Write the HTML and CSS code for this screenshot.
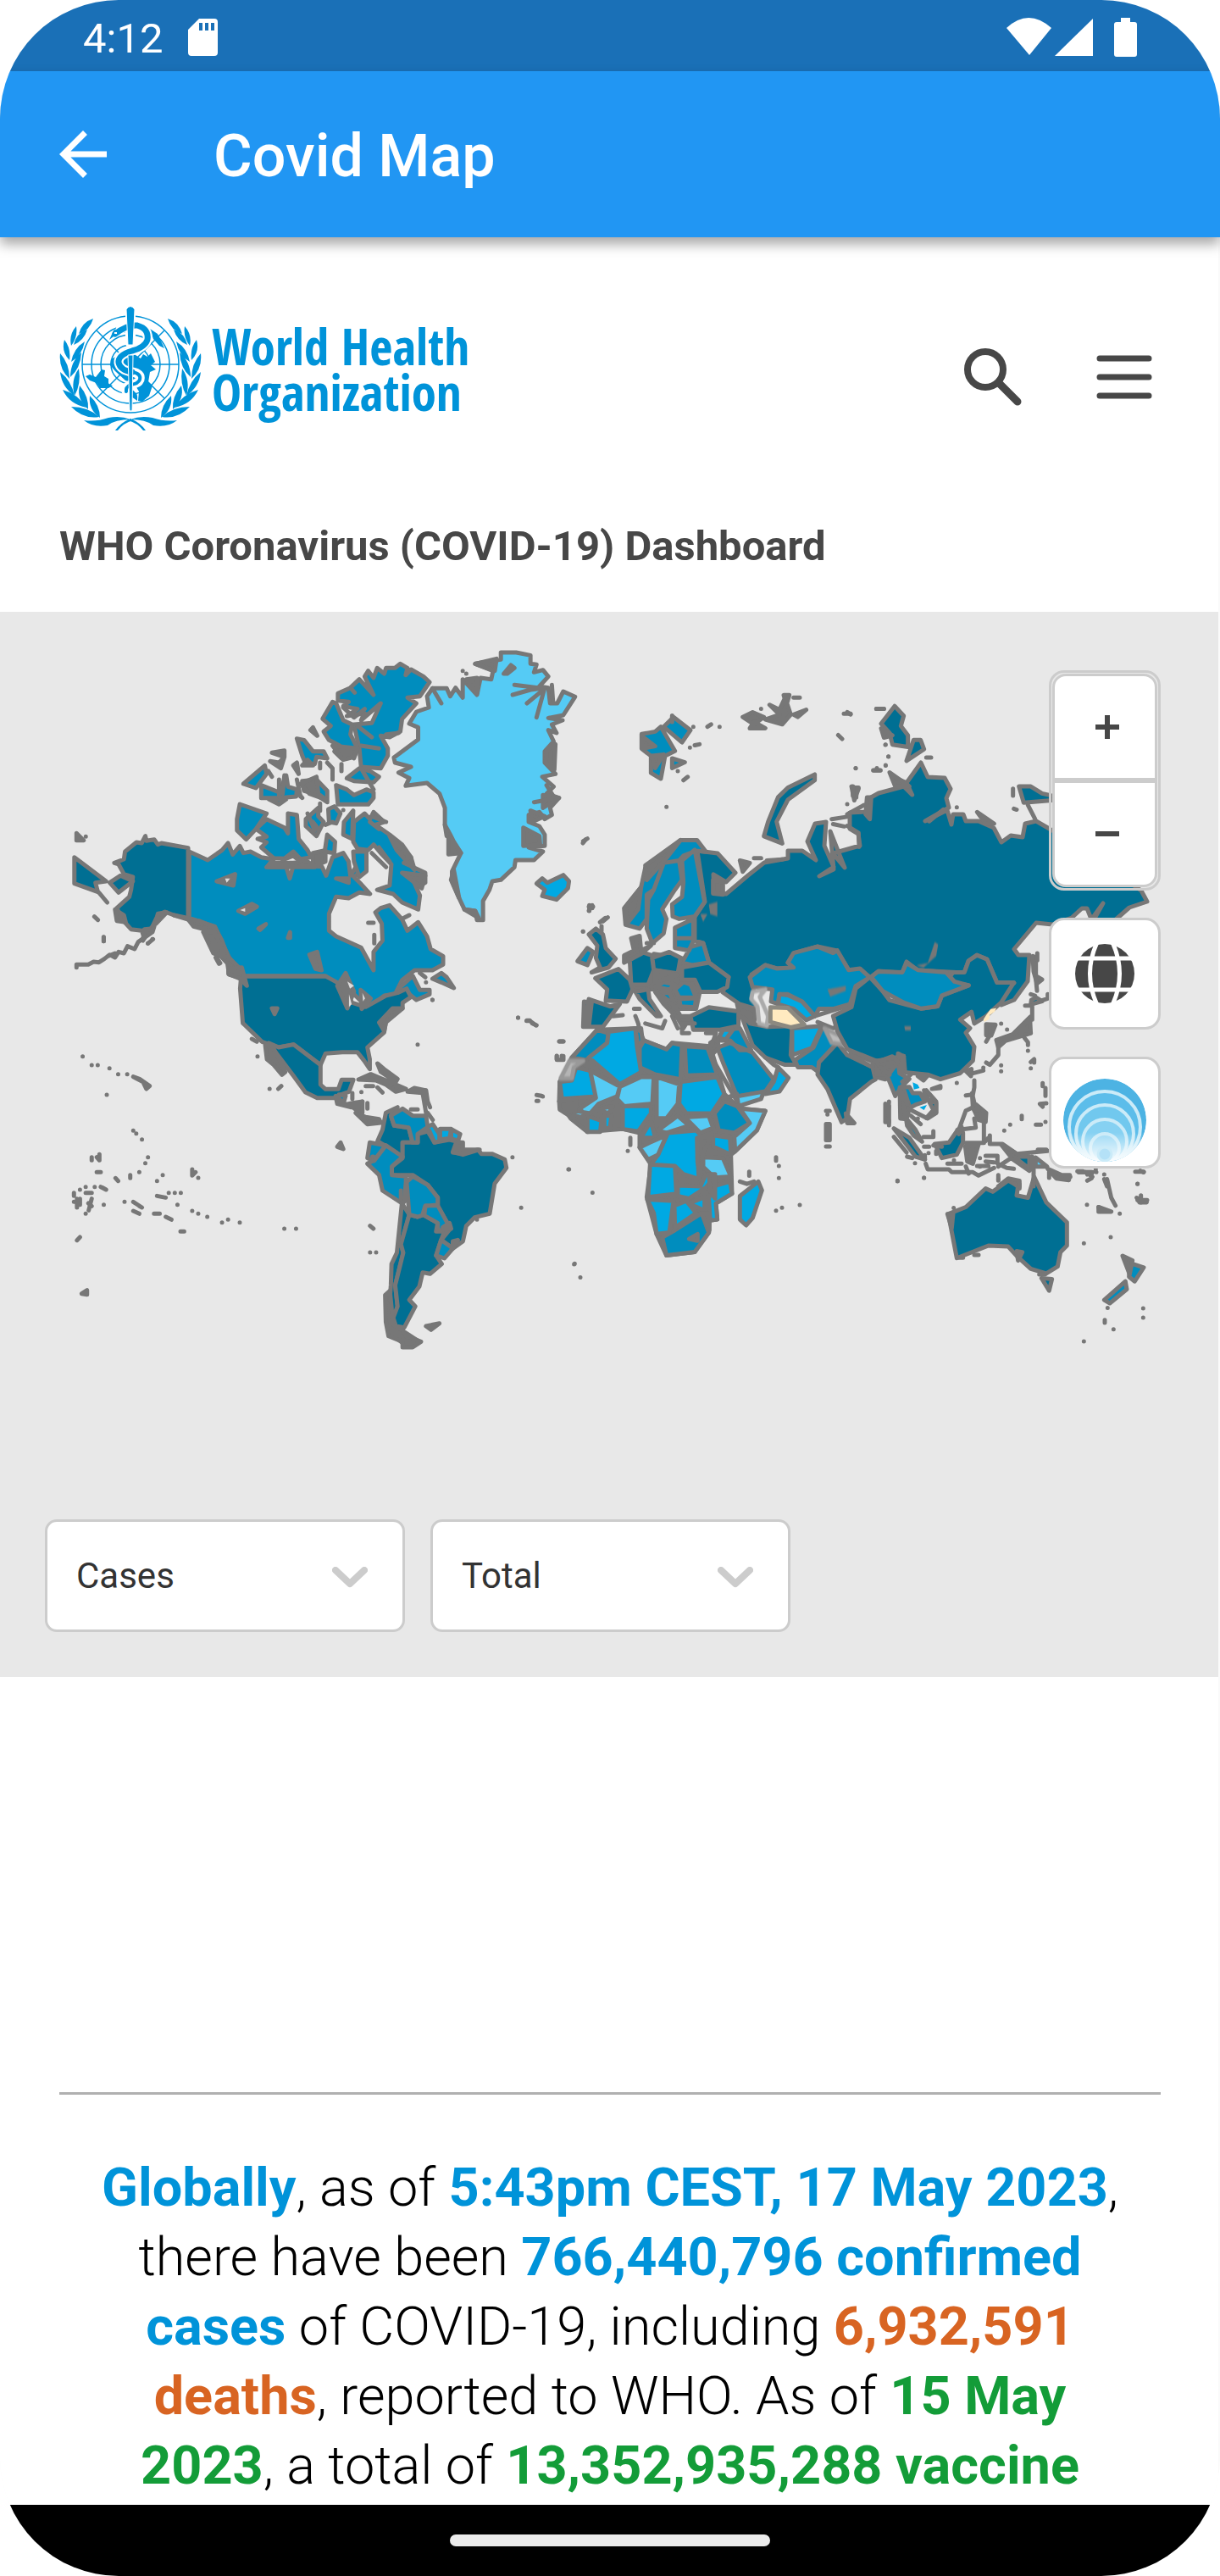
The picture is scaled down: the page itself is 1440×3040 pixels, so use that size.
FILE: index.html
```html
<!DOCTYPE html>
<html lang="en">
<head>
<meta charset="utf-8">
<meta name="viewport" content="width=device-width, initial-scale=1">
<title>Covid Map</title>
<link rel="stylesheet" href="styles.css">
</head>
<body>
<div class="screen">
  <div class="status-bar">
    <span class="clock">4:12</span>
    <svg class="sd" width="35" height="44" viewBox="0 0 35 44" aria-hidden="true"><path fill="#fff" fill-rule="evenodd" d="M13 0H31Q35 0 35 4V40Q35 44 31 44H4Q0 44 0 40V13ZM13 5V14H17V5ZM20 5V14H24V5ZM27 5V14H31V5Z"/></svg>
    <div class="status-icons">
      <svg width="154" height="46" viewBox="0 0 154 46" fill="#fff" aria-hidden="true"><path d="M0 12Q26-12 53 12L27 44Z"/><path d="M102 1V45H57Z"/><path d="M135 0H146V5H151Q154 5 154 8V43Q154 46 151 46H130Q127 46 127 43V8Q127 5 130 5H135Z"/></svg>
    </div>
  </div>
  <header class="app-bar">
    <button class="icon-button" aria-label="Back"><svg width="56" height="56" viewBox="4 4 16 16" fill="#fff"><path d="M20 11H7.830L13.420 5.410 12 4l-8 8 8 8 1.410-1.410L7.830 13H20z"/></svg></button>
    <h1 class="app-title">Covid Map</h1>
  </header>

  <main class="page">
    <div class="site-header">
      <a class="brand" href="#">
        <svg class="emblem" width="168" height="148" viewBox="0 0 168 148" aria-hidden="true">
          <defs>
            <g id="laurel" fill="#0093d9">
              <path d="M40 15Q27 19 23 33Q36 29 40 15M20 24Q11 34 14 47Q22 37 20 24M6 40Q2 54 12 64Q14 50 6 40M1 56Q-1 74 12 86Q12 68 1 56M1 78Q3 96 18 106Q14 88 1 78M4 99Q12 116 32 120Q22 104 4 99M14 119Q28 134 47 131Q34 119 14 119"/>
              <path d="M33 28Q20 32 17 46Q29 41 33 28M30 42Q17 50 14 66Q27 58 30 42M26 55Q13 66 13 84Q25 74 26 55M23 74Q13 88 18 106Q26 92 23 74M24 94Q20 110 34 122Q35 107 24 94M36 106Q34 122 48 132Q48 117 36 106"/>
              <path d="M29 135Q44 137 58 132Q72 129 84 134Q66 134 57 141Q40 144 29 135M84 133Q72 138 66 147H69Q76 138 87 135Z"/>
            </g>
          </defs>
          <use href="#laurel"/><use href="#laurel" transform="translate(168 0) scale(-1 1)"/>
          <g fill="none" stroke="#0093d9" stroke-width="1.500"><circle cx="84" cy="69" r="57"/><circle cx="84" cy="69" r="46"/><circle cx="84" cy="69" r="35"/><circle cx="84" cy="69" r="23"/><path d="M27 69H141M44 29L124 109M124 29L44 109"/></g>
          <path fill="#0093d9" d="M31 83L36 81 43 84 50 75 54 76 53 83 58 86 58 92 63 94 58 97 48 97 44 91 36 88ZM61 63L72 57 78 50 96 62 99 57 104 60 108 56 113 66 108 70 114 75 107 78 105 90 110 94 106 106 98 113 93 112 94 101 88 91 78 88 66 77 60 70ZM59 40L64 29 76 22 82 22 79 31 68 33ZM107 27L116 33 124 50 118 47 111 39ZM84 98Q94 102 92 112L85 107Z"/>
          <g fill="none" stroke-linecap="round">
            <path stroke="#fff" stroke-width="11" d="M72 28Q80 22 92 23Q106 27 104 40Q101 49 86 53Q69 58 70 67Q72 76 86 78Q97 80 95 87Q93 92 84 93Q78 96 79 101"/>
            <path stroke="#fff" stroke-width="12" d="M84 5V44"/>
            <path stroke="#0093d9" stroke-width="7" d="M66 33Q80 22 92 23Q106 27 104 40Q101 49 86 53Q69 58 70 67Q72 76 86 78"/>
            <path stroke="#0093d9" stroke-width="4" d="M86 78Q97 80 95 87Q93 92 84 93Q78 96 79 101"/>
          </g>
          <path fill="#0093d9" stroke="#fff" stroke-width="1" d="M79 4Q84-3 89 4L87 46H81ZM81 58H87L86 123Q84 125 83 123Z"/>
          <path d="M65 32h3" stroke="#fff" stroke-width="2"/>
        </svg>
        <span class="brand-name">World Health<br>Organization</span>
      </a>
      <div class="site-actions">
        <button class="icon-button" aria-label="Search"><svg width="68" height="68" viewBox="0 0 68 68" fill="none" stroke="#474747"><circle cx="25" cy="25" r="21" stroke-width="8"/><path d="M41 41L63 63" stroke-width="9" stroke-linecap="round"/></svg></button>
        <button class="icon-button" aria-label="Menu"><svg width="66" height="52" viewBox="0 0 66 52" stroke="#474747" stroke-width="7" stroke-linecap="round"><path d="M4 4H62M4 26H62M4 48H62"/></svg></button>
      </div>
    </div>
    <h2 class="dashboard-title">WHO Coronavirus (COVID-19) Dashboard</h2>

    <section class="map" aria-label="World map of cases">
      <svg class="world" viewBox="0 722 1438 1071" role="img" aria-label="World map">
        <defs><filter id="soft" x="-30%" y="-30%" width="160%" height="160%"><feGaussianBlur stdDeviation="2"/></filter></defs>
        <!-- Arctic Canada, Alaska, Greenland -->
        <g class="land" transform="translate(60 740) scale(.42092 .33333)">
          <g class="c4">
            <path d="M385 782L310 765 300 770 290 752 268 757 265 740 255 765 240 762 208 795 205 822 178 835 190 840 205 875 230 885 225 930 220 955 185 995 200 1035 225 1070 255 1075 262 1100 285 1060 300 1020 320 1008 345 1020 385 1035Z"/>
            <path d="M66 815L155 900 125 905 132 938 66 908ZM165 905L195 880 230 900 190 940ZM262 1070L280 1068 258 1110Z"/>
          </g>
          <g class="c3">
            <path d="M388 795L440 825 480 790 497 765 510 805 530 775 540 800 560 795 590 815 625 822 605 850 660 850 670 890 680 845 760 848 772 880 790 815 820 800 835 830 840 880 855 850 865 870 850 885 870 910 895 945 865 940 835 960 800 955 780 1015 780 1075 800 1095 870 1135 905 1215 905 1150 930 1110 928 1050 910 1010 925 995 950 985 985 1035 1000 1075 1030 1045 1055 1095 1065 1140 1100 1165 1100 1195 1070 1215 1020 1215 985 1250 965 1300 935 1305 890 1350 850 1300 800 1265 770 1235 540 1235 500 1170 460 1060 388 1030Z"/>
            <path d="M605 680L655 710 665 730 665 660 690 665 695 750 720 790 730 815 700 822 680 795 655 820 625 818 590 780 605 762 580 750 605 742 575 715ZM530 627L605 660 575 715 548 752 522 720 522 680ZM715 680L750 640 750 670 765 690 745 740 715 705ZM778 645L795 635 812 660 800 695 780 690ZM775 735L797 760 795 800 768 795ZM820 735L822 690 848 650 845 750Z"/>
            <path d="M850 690L880 660 895 680 905 655 935 690 910 700 950 735 985 770 1010 815 990 835 1050 870 1050 905 1030 920 1010 880 1035 950 1030 1000 985 975 960 945 915 930 950 915 955 840 925 800 905 770 890 790 860 785 848 760ZM848 795L885 795 885 865 865 885 850 830Z"/>
            <path d="M830 535L865 500 895 510 920 530 905 550 850 545ZM800 560L830 575 850 595 885 575 905 585 905 605 890 628 805 628Z"/>
            <path d="M805 235L840 215 865 185 905 240 880 175 890 155 905 180 915 145 935 165 940 145 965 145 980 130 1000 145 995 170 1010 150 1045 175 1062 195 1035 245 1000 250 1025 270 985 325 980 370 950 390 925 385 945 430 945 455 925 500 870 495 865 430 850 345 900 340 925 270 870 330 880 305 830 315 860 290 820 280 835 265 805 260Z"/>
            <path d="M790 265L800 270 820 330 845 345 840 380 860 430 850 465 830 435 815 465 795 440 810 420 780 400 765 370 785 350 762 325ZM690 395L710 400 735 440 765 440 775 465 745 460 740 485 715 485 705 455ZM540 555L600 490 605 520 575 570ZM590 560L640 585 660 525 665 565 690 575 688 600 640 605 590 605ZM612 610L660 610 640 628ZM705 545L745 540 775 580 775 620 740 590 710 580Z"/>
            <path d="M1070 1245L1095 1225 1110 1240 1130 1278 1095 1258ZM975 1280L1015 1235 1035 1285 1062 1285 1062 1300 1025 1320 1005 1300Z"/>
          </g>
          <path class="c1" d="M1262 90L1305 90 1345 100 1345 130 1362 133 1355 160 1380 152 1395 175 1370 210 1395 215 1400 270 1420 270 1437 228 1470 247 1437 312 1395 322 1435 330 1405 345 1418 375 1395 365 1410 405 1385 440 1385 480 1415 520 1378 530 1410 565 1390 590 1425 605 1400 640 1405 665 1385 680 1370 655 1340 665 1340 690 1370 705 1385 735 1385 775 1340 780 1380 795 1355 825 1303 825 1300 850 1262 895 1238 900 1230 930 1212 970 1212 1037 1195 1037 1190 1005 1160 1000 1145 960 1125 900 1125 865 1150 800 1130 760 1120 735 1105 700 1105 640 1090 590 1055 552 995 562 1005 535 975 515 1010 495 965 480 962 462 1030 398 1030 355 1005 342 1025 300 1060 285 1055 245 1070 217 1110 217 1120 245 1135 215 1155 250 1155 185 1195 240 1205 180 1235 185 1240 155 1190 130 1262 115Z"/>
          <path class="c2" d="M1362 908L1378 890 1392 905 1437 878 1453 900 1450 925 1418 965 1378 952 1385 930Z"/>
          <path class="rock" d="M1190 130L1250 112 1245 155ZM1165 185L1195 180 1195 235ZM1325 710L1370 740 1372 770 1325 775ZM1390 435L1415 415 1412 505 1388 480ZM1115 735L1150 800 1115 805ZM1130 860L1145 960 1122 895ZM1160 1000L1190 1005 1200 1030ZM1270 165L1290 135 1300 145 1280 165ZM1380 595L1425 605 1380 640ZM1345 650L1385 670 1350 690ZM72 730L92 755 72 755ZM735 355L747 385 728 365ZM620 445L655 437 655 460ZM615 475L640 480 655 460 645 500ZM385 1035L415 1040 460 1065 480 1110 495 1165 535 1215 540 1245 500 1230 495 1190 465 1150 455 1110 430 1070 400 1060ZM700 555L745 530 750 590 770 610 725 590ZM680 490L690 480 695 520ZM705 490L735 490 720 470ZM790 420L860 430 850 460 820 470ZM735 800L770 790 770 830 735 850ZM800 890L835 890 835 905ZM950 740L1010 815 1020 860 970 790ZM985 870L1050 880 1040 925ZM615 835L680 835 720 830 740 850 610 850ZM180 1000L205 1020 210 1045 185 1040ZM300 1015L325 1010 295 1050ZM345 1020L385 1030M430 1065L450 1110"/>
          <path class="line" d="M1295 240L1345 222 1385 215 1362 320M1300 205L1385 218 1335 270M840 215L852 232M1070 217L1095 270M820 285L850 320 880 290M900 670L940 690M895 690L920 715M900 800L940 850M920 780L950 830M940 380L975 375M870 500L905 575M775 480L790 500 790 540M735 690L750 715M655 525L650 590M1405 205L1408 260M1155 155h0M1165 165h0M650 825L680 810 700 830M770 700L790 690M720 660L740 720M690 540L700 600M640 540V600M870 420L920 430M860 350L900 390M1355 620L1400 610M1390 560L1410 600M1105 700L1110 740M1125 750L1125 800"/>
          <path class="dots" d="M72 1205V1195H105L120 1185 135 1187 150 1175 165 1160 180 1170 190 1150 205 1155 215 1130 235 1140 245 1115 262 1100 285 1080 290 1060M160 1165L180 1155M135 940L158 975M122 1025L132 1037M148 1097V1112M98 742h0M272 1120h0M285 1105h0M465 1170L475 1190M1492 765L1500 752M1510 985V1005M1518 985V995M1555 1030L1540 1045M1492 1078h0M1310 1383h0M1335 1393h8M1350 1403L1362 1410M1070 1320h0M820 648h0M755 625V650M890 1047H905M907 1090V1120M990 1030L1005 1020M1035 1225L1050 1240M1052 1258h0M695 590L705 605M815 485V510M610 510L620 530M755 480V500"/>
        </g>
        <!-- Americas -->
        <g class="land" transform="translate(60 1100) scale(.39541 .33333)">
          <g class="c4">
            <path d="M568 157H822L865 185 900 250 940 265 1000 225 1035 215 1062 200 1075 230 1050 250 1050 270 1020 285 1000 320 995 355 945 408 952 450 952 485 935 455 915 425 870 425 820 430 805 470 725 398 680 408 630 388 580 330 573 322 565 200Z"/>
            <path d="M650 392L680 408 725 398 805 470 805 540 820 556 858 556 868 523 903 523 890 565 855 580 855 587H795L760 567 725 510Z"/>
            <path d="M1000 640L1035 620 1015 650 1025 685 1068 692 1080 745 1050 745 1050 795 1000 758 975 740 990 700Z"/>
            <path d="M1050 745L1095 745 1095 715 1125 705 1145 745 1190 735 1225 745 1200 780 1230 785 1275 770 1285 785 1318 785 1355 805 1360 835 1325 890 1310 997 1265 1010 1240 1040 1230 1095 1200 1120 1165 1090 1193 1050 1155 970 1155 940 1125 895 1080 860 1018 860 1018 830 1050 800Z"/>
            <path d="M1048 960L1070 1000 1045 1105 1052 1135 1028 1250 1035 1325 1025 1365 1035 1400 1100 1450 1060 1465 1015 1420 1010 1330 1015 1250 1017 1175 1033 1135Z"/>
            <path d="M1070 1000L1095 1008 1112 1000 1155 1030 1150 1060 1175 1060 1165 1090 1150 1145 1167 1175 1132 1210 1110 1205 1100 1255 1070 1302 1088 1325 1055 1400 1030 1395 1022 1365 1035 1325 1028 1250 1052 1135 1045 1105Z"/>
          </g>
          <g class="c3">
            <path d="M1015 650L1050 625 1080 650 1120 650 1125 690 1095 715 1095 745 1080 745 1068 692 1025 685Z"/>
            <path d="M952 745L1000 755 965 810 945 800ZM1000 755L1050 795 1018 830 1018 860 1060 865 1060 885 1055 955 1048 960 990 915 980 860 945 820 965 808ZM1062 885L1080 865 1125 895 1155 940 1155 965 1118 970 1115 1000 1095 1008 1070 1000ZM1118 968L1155 968 1192 1048 1155 1058 1155 1030 1110 1000ZM1165 1090L1200 1120 1175 1155 1150 1145ZM860 575L880 580 875 600 858 600Z"/>
          </g>
          <path class="c2" d="M1125 690L1140 680 1160 715 1160 740 1145 745ZM1162 697L1195 697 1190 730 1162 735ZM1195 697L1222 715 1215 740 1195 730Z"/>
          <path class="c1" d="M895 615L924 605 922 638Z"/>
          <path class="rock" d="M918 522L955 503 1010 530 1060 555 1030 565 1000 540 970 525ZM1065 565L1085 552 1118 560 1115 570ZM975 465L995 485 1035 520 1030 530 985 495ZM910 640L940 655 980 662 985 675 945 680ZM850 580L880 610 900 605 930 600 925 615 895 620 855 608ZM998 1285L1012 1270 1018 1340 1022 1390 1050 1410 1060 1430 1105 1450 1080 1470 1050 1470 1050 1450 1008 1430 1000 1380ZM1120 1395L1160 1385 1135 1408ZM1210 745L1230 745 1230 770 1280 770 1230 788 1200 778ZM640 400L660 400 700 495 690 505 665 470 645 450ZM530 130L570 125 585 190 565 165 530 148ZM455 0L490 0 520 90 485 75ZM980 320L1020 270 1050 270 1000 320 995 350ZM246 512L265 520 295 545 285 555 275 530ZM855 760L865 745 873 768ZM92 1280L108 1268 108 1283ZM1200 1120L1215 1090 1200 1095ZM1170 1045L1190 1030 1195 1050Z"/>
          <path class="line" d="M1120 560L1125 600 1132 620M1125 640L1140 665M1075 628H1095M975 550L990 568M1110 570L1120 640M900 570V590M1045 915V945M960 795h3M930 600V640"/>
          <path class="dots" d="M95 440h0M122 471h0M140 471h0M175 482h0M201 503h0M228 503h0M167 576h0M246 703h0M255 713h0M272 734h0M122 797V808M145 787V808L137 797M137 850H149M290 797h0M282 818h0M264 850h0M237 860V871M193 871L201 881M334 860h0M317 881h0M422 840V862L432 850M440 870h0M104 902h0M131 902h0M149 902L165 912 155 905M87 912h0M69 923V934M69 955h0M104 923H122M78 944V975M87 944V965M122 944L113 985M122 970L112 960M104 997h0M158 965h0M220 955h0M246 955L272 975 264 970M246 987L264 997M308 997H325M343 1008L360 1018M378 965h0M317 934L343 940M352 923h0M370 923h0M388 923h0M422 987h0M440 997h0M467 1008h0M511 1028h0M529 1018h0M564 1028h0M697 1050h0M732 1050h0M387 1060H398M78 1091L87 1080M953 1040L963 1050M953 1134h0M971 1134h0M1378 797h0M1404 976h0M1545 840h0M1562 1176h0M1395 303h0M1420 314H1430L1448 330M1095 398h0M1139 240h0M617 440h0M653 555h0M679 555L688 545M600 378L615 388M1518 387H1530M1510 438V450M1525 438V450M1450 577L1465 580M1450 598h5M158 18V32M290 40L305 25M492 90L502 112M1272 1018h0M927 566h0M940 545H962M945 605V625"/>
          <g filter="url(#soft)" class="lakes"><path d="M772 80L795 70 808 135 790 130ZM660 270H676L668 290ZM855 190L880 145 905 210 885 270ZM925 205L955 235 928 272Z"/><path class="water" d="M885 175L905 190 893 200ZM890 220L898 255 890 265ZM930 215L938 235 932 245Z"/><path d="M495-180L550-205 545-165ZM560-75L600-100 615-90 580-65ZM620-12L642-28 625-8ZM708 20L714 0V20Z"/><path class="water" d="M520-190L535-190 525-175ZM565-78L580-85V-72Z"/></g>
        </g>
        <!-- Russia -->
        <g class="land"><path class="c4" d="M823 1004L847 1007 868 1030 857 1041 842 1032 843 1053 857 1055 883 1033 902 1018 930 1013 930 1004 947 1004 963 1015 953 993 962 972 975 970 973 998 984 1023 967 1034 984 1026 980 981 997 1024 983 1007 1015 998 1013 984 1003 978 1003 959 1023 958 1028 941 1037 936 1067 928 1087 900 1095 917 1115 918 1122 931 1117 942 1120 953 1092 969 1118 956 1123 973 1125 961 1137 961 1140 969 1155 969 1173 977 1182 994 1193 986 1207 988 1210 972 1223 969 1242 980 1347 1051 1354 1064 1333 1071 1300 1100 1289 1084 1302 1066 1293 1082 1287 1082 1283 1072 1277 1072 1265 1083 1242 1091 1223 1089 1197 1120 1202 1127 1215 1127 1213 1158 1197 1180 1182 1186 1182 1172 1197 1160 1177 1160 1165 1132 1153 1127 1143 1134 1138 1148 1083 1145 1070 1135 1065 1148 1037 1146 1028 1153 1002 1145 988 1122 965 1117 937 1125 930 1136 937 1142 917 1143 903 1139 887 1150 893 1191 873 1185 853 1171 860 1153 837 1136 830 1113 820 1110 820 1082 832 1064Z"/></g>
        <!-- Europe, Middle East, Africa -->
        <g class="land" transform="translate(640 740) scale(.33333 .57398)">
          <path class="rock" d="M62 935L105 885 195 828 340 825 360 850 440 868 460 855 595 862 645 960 700 990 790 995 760 1035 683 1078 668 1085 672 1165 615 1185 620 1218 592 1220 590 1245 540 1285 440 1292 405 1248 370 1172 385 1105 345 1070 345 1040 285 1032 160 1038 100 1010 60 975ZM365 700L395 672 590 690 560 745 545 785 480 785 400 745 350 745 320 740 315 690Z"/>
          <g class="c3">
            <path d="M290 578L350 535 365 495 430 470 490 438 548 438 580 462 545 460 500 470 485 480 430 485 395 540 370 550 370 600 345 620 295 612ZM395 540L430 485 485 480 495 520 470 540 425 580 440 600 430 630 390 650 370 620 375 560ZM495 480L540 458 570 550 575 565 540 595 485 600 462 595 460 570 495 555 500 525ZM470 618L535 600 535 645 520 665 470 660ZM470 640H535M495 690L525 658 570 650 590 690 530 695ZM470 745L500 730 525 735 545 762 485 762ZM535 730L550 735V750L535 748ZM485 765L545 763 540 782 490 780ZM125 687L160 660 180 668 160 695ZM400 740L430 730 470 735 450 745ZM370 715L395 708 440 715 400 725ZM410 752L450 752 470 775 440 765Z"/>
            <path d="M352 220L400 215 420 205 470 255 435 265 420 312 385 300 385 265 352 250ZM430 205L465 185 525 212 495 237ZM460 270L505 278 460 290Z"/>
            <path d="M735 720L790 695 830 702 890 700 870 690 890 670 975 657 1030 670 1045 665 1085 705 1125 702 1160 720 1110 738 1090 775 1030 785 980 785 965 800 920 770 870 755 840 755 835 775 810 770 815 745 745 740ZM895 890L960 865 995 820 1045 855 980 895 990 920 955 905 905 905ZM620 850L640 828 700 825 740 870 700 870 665 850ZM620 865L665 855 745 875 820 930 790 955 690 965 640 895Z"/>
            <path d="M105 885L195 828 235 835 230 855 170 885 155 890ZM330 825H350L355 850 340 865ZM345 865L360 850 440 868 460 855 495 860 490 930 400 920 345 905ZM505 862L585 865 620 920 510 922ZM610 1000L645 975 690 985 735 1020 680 1040 625 1035ZM425 1255L470 1240 565 1205 590 1245 540 1285 440 1292Z"/>
          </g>
          <g class="c4">
            <path d="M495 700L590 690 660 720 655 740 620 750 560 750 540 725 495 725ZM390 680L450 668 490 680 480 712 395 705ZM310 685L350 668 388 675 395 705 375 735 315 735ZM188 722L270 703 310 725 320 745 300 770 225 768 230 745ZM165 765L240 780 275 775 215 822 155 822ZM148 770L175 772 165 822 145 822ZM330 750L375 745 380 765 420 800 405 800 345 765ZM175 710L205 700 190 680 195 655 165 632 190 620 215 632 225 660 260 682 235 700ZM525 800L590 782 695 790 695 820 630 828 535 828Z"/>
            <path d="M965 303L965 315 870 355 830 400 850 445 785 430 800 400 835 350 870 330ZM700 790L735 815 800 822 885 820 880 880 900 900 860 900 790 885 745 860 725 830ZM980 895L1045 855 1080 880 1170 905 1180 930 1165 935 1090 970 1080 1010 1060 1018 1010 950 975 920Z"/>
          </g>
          <g class="c2">
            <path d="M835 775L840 755 870 757 920 770 965 800 935 808 890 785ZM885 825L990 820 955 865 885 880ZM790 960L820 935 835 905 872 927 840 955ZM625 845L640 828 675 828 650 848ZM235 832L330 825 335 860 350 915 275 940 165 885 230 855ZM62 935L105 932 120 905 170 912 190 965 70 970ZM490 935L620 925 645 960 600 1000 510 1000 485 980ZM285 985H385V1000L340 1037 285 1032ZM160 1005L210 1015 205 1038 160 1038ZM220 1005H245L240 1030H220ZM350 1050L385 1015 400 1050ZM445 1040L545 1035 570 1050 550 1090 555 1135 500 1125 470 1108 385 1105 410 1085ZM605 1045L665 1050 668 1085 605 1068ZM382 1105L470 1108 475 1165 375 1172ZM480 1148L560 1150 580 1125 610 1130 580 1152 520 1175 480 1170ZM605 1150L665 1140 672 1165 615 1185 620 1218 595 1220 590 1175ZM520 1185L575 1172V1200ZM468 1190L510 1180 545 1205 470 1235ZM372 1177L465 1180 450 1245 405 1248 395 1205ZM700 1170L765 1140 778 1158 745 1215 722 1230 700 1218Z"/>
          </g>
          <g class="c1">
            <path d="M170 912L275 945 265 965 200 980 170 1000 120 995 190 968ZM275 945L350 925H395L390 980 290 985 265 970ZM405 925L485 940 480 980 440 1010H405ZM690 965L785 955 775 970 695 985ZM735 1020L700 990 790 995 760 1035 683 1078 680 1048ZM505 1008L590 1005 605 1030 560 1040ZM410 1035L480 1005 520 1025 440 1040ZM345 1070L380 1060 440 1045 410 1085 375 1095ZM570 1090L640 1092 668 1130 610 1132 570 1110ZM195 992L250 985 235 1000ZM80 998L140 995 150 1010Z"/>
          </g>
          <path class="line" d="M965 800L1085 778M975 812L1030 825 1060 815M1090 872L1180 897 1240 895 1275 882M1090 880L1170 905M605 890L690 975M640 970L690 960M790 885L820 900 835 905"/>
          <path class="rock" d="M400 750L470 780 490 800 525 800 500 825 480 805 430 775ZM400 705L480 715 400 730ZM315 640L345 635 350 665 385 655 350 672 290 690 290 675 325 665ZM60 975L120 970 120 985 110 1010 62 992ZM690 775L755 790 750 815 700 800ZM595 855L620 845 625 865 600 880ZM548 1050L600 1048 570 1080 560 1125 550 1100ZM590 1125H612V1175L595 1160ZM520 1258L550 1248V1262ZM565 1205H592V1240ZM1170 900L1220 900 1215 930 1180 925ZM1075 1000L1105 1020 1080 1020ZM295 575L350 535 340 580 300 610ZM365 490L490 438 440 475 370 520ZM355 225L400 245 355 250ZM388 265L430 262 400 290ZM710 185L745 175 785 185 750 200ZM805 160L840 170 860 145 880 180 850 200 790 190 840 180ZM890 180L935 170 905 185ZM750 195L790 208H735ZM605 520L640 525 640 550 605 548ZM700 480L735 485 710 503ZM855 140L875 140 865 160ZM1250 310L1290 320 1310 345ZM1150 350L1165 350 1160 395 1145 385Z"/>
          <g filter="url(#soft)"><path fill="#b5b5b5" stroke="#999" d="M65 928L97 892 145 892 112 905 105 928Z"/><path fill="#e8e8e8" stroke="#aaa" d="M745 750L790 745 770 760 800 800 795 820 768 815 762 780 740 765Z"/><path fill="#bbb" stroke="#999" d="M1000 825L1060 842 1065 858 1025 855Z"/><path fill="#777" stroke="none" d="M590 570L620 565 620 595 595 590ZM1010 745L1075 738 1075 748 1020 760ZM560 590L585 590 570 606Z"/></g>
          <path fill="#ffeac0" stroke="#8c8980" d="M808 782L870 783 928 817 880 823 808 812Z"/>
          <path class="dots" d="M165 575H180M165 583h0M215 605L232 597M210 615V625M145 626h0M145 440L160 435M440 370h0M355 223h0M480 296h0M500 315L515 308M523 248h0M540 243L557 241M535 205h0M585 205L598 200M628 205h0M460 182V195M1068 178H1092M1048 222L1062 230M1110 290h0M1173 295H1197M1185 290h0M1100 330H1120M1112 340V350M1215 242h0M1226 266h0M1216 284h0M1183 168H1210M1080 364h0M1025 395L1080 390M1030 405L1070 410M890 145H912M775 168h0M750 475H775M795 480L850 478M250 800L285 798M325 785H345M330 800L340 815 345 830M365 815L425 825 435 810M460 800L480 825M540 815L495 815 495 835H520M580 835H615L600 860M60 852H75M52 882V890H75V882M2 965h0M95 1115h0M178 1163h0M115 1309h0M135 1337h0M312 1050V1065M303 1077h0M733 1120V1128M700 1140L725 1145 750 1140M828 1090V1097M838 1108h0M838 1133h0M828 1200h0M849 1194h0M912 1188h0M1005 995H1018M1010 1002h0M1005 1022V1055H1018V1022ZM1005 1068H1018M1215 980V1018H1228V985M1258 1139h0M370 650h25"/>
        </g>
        <!-- East Asia, Oceania -->
        <g class="land" transform="translate(1000 780) scale(.33333 .54847)">
          <g class="c4">
            <path d="M80 680L125 710 150 730 262 748 320 743 335 720 430 698 350 690 375 670 415 670 430 645 460 633 495 642 530 692 590 692 545 735 490 765 450 780 440 755 400 772 435 790 420 800 450 830 445 860 400 887 330 900 285 890 205 885 200 850 150 860 100 860 0 835-35 796-50 764 15 745 30 705Z"/>
            <path d="M358 1190L420 1175 490 1135 515 1142 570 1118 605 1130 600 1150 640 1155 662 1110 705 1165 778 1208 778 1258 755 1272 745 1303 705 1318 650 1308 600 1280 570 1260 500 1258 388 1285ZM688 1328L725 1330 715 1355ZM120 135L168 97 200 118 190 140 215 160 215 185 160 180 150 155ZM210 215L235 170 260 170 272 190ZM608 270H650L690 285 740 292 725 300 625 305Z"/>
          </g>
          <g class="c3">
            <path d="M85 680L110 668 195 670 210 650 250 665 350 670 380 690 430 698 335 720 320 743 262 748 200 735 125 710ZM1000 1295L1050 1305 1018 1335 998 1325ZM910 1375L985 1335 990 1352 930 1382Z"/>
          </g>
          <path class="rock" d="M110 860L200 850 200 870 150 885ZM105 870L150 890 105 890ZM975 1280L1010 1290 1000 1320ZM890 1175L935 1185H895ZM1025 1155L1060 1165 1035 1165ZM120 145L160 160 130 165ZM355 1190L375 1190 370 1220ZM600 1270L620 1272 605 1290ZM460 325L520 350 490 350ZM150 240L220 270 170 270ZM15 270L40 275 25 300ZM585 1120L610 1125V1135Z"/>
          <path class="line" d="M100 860L130 885 170 895M290 345L340 320M640 310L665 340M20 270V290M0 330L60 310M0 355L40 370 42 400M920 1115L935 1155 950 1172M820 1100H870L850 1105"/>
          <path class="dots" d="M103 103H130M0 110L12 115M30 231h0M92 235H118M146 206h0M136 225h0M136 180h0M280 208H297M388 315h0M587 275V290M590 318L600 320M272 1112h0M178 1118h0M377 1177h0M535 1115h0M770 1110H790M815 1098H835M845 1100L868 1110M882 1100h0M910 1105h0M1038 1097L1048 1100M1028 1125h0M1028 1160H1062M1040 1150V1165M849 1170h0M965 1189h0M890 1175V1185M838 1253h0M933 1240h0M912 1418V1424M943 1438h0M838 1464h0M1048 1393h0M1048 1413h0M922 1392h0M450 1278H465M395 1284H410M700 1320H680"/>
          <path filter="url(#soft)" fill="#777" stroke="none" d="M245 655L285 650 310 605 322 610 315 635 270 660ZM202 786H225V795H205Z"/>
        </g>
        <!-- Japan, Korea, South-East Asia -->
        <g class="land" transform="translate(1040 1120) scale(.33333)">
          <g class="c4">
            <path d="M470 298L528 240V290ZM532 180L550 172 570 185 530 196ZM537 25L548 30V95L570 108 552 122 540 80ZM190 690L240 685 268 645 290 650 290 685 268 728 215 740ZM45 635L100 668 155 745 122 735 92 695ZM470 735H525V778ZM305 705L330 705 318 735ZM130 450L165 448 150 465ZM165 530L195 545V580L160 598 185 570Z"/>
          </g>
          <g class="c3"><path d="M22 450L60 400 65 440 100 460 70 490 50 520ZM78 490L100 488 112 510 138 510 155 540 125 550 102 562ZM88 598L122 640 145 682 115 660 92 625ZM152 500L165 520 160 535Z"/></g>
          <path class="c1" d="M547 738L588 770H547Z"/>
          <path fill="#00a9e3" stroke="none" d="M112 472L130 480 136 492 116 497ZM136 560L162 552 152 570Z"/>
          <path class="rock" d="M408 322L470 300 525 250 530 298 440 325 415 348ZM372 266L405 268 390 306 372 305ZM322 510L330 545 372 580 370 612 345 605 325 560ZM66 490L78 520 100 565 90 602 68 600ZM590 778L640 800 668 800 665 818 620 812ZM425 692L475 722 455 730ZM180 495L210 485V492ZM300 432L320 425 318 450ZM60 370L80 380 75 440 60 395ZM270 640L285 630 275 655ZM298 700L345 692 325 760 305 752Z"/>
          <path class="line" d="M415 345L415 375 385 410 372 402M535 205V250M510 200H535M570 182L590 175 590 160M530 160L545 165M553 15V40M548 105L552 148M385 305L372 328M325 440L362 430M330 465V490L325 515 300 518M325 560L300 572 275 640 335 632 330 600M364 610V686H300M330 570H345M105 590L140 620M150 665H185V645M158 760L165 780 240 780 250 790H325L345 802 400 775M340 768L380 768M385 660V690H430L480 725 590 715M370 732H412V760L445 775 470 778M370 752L400 755M415 770L460 740 525 785M540 780V840M560 820M535 735V780M595 790V810M700 790H745V812L730 820M790 815L800 840M900 788H930M185 695L215 700M155 745V730M110 440L75 470M60 400L40 380 0 395M0 420L30 445M415 840L450 812 490 820V840M95 565L165 600 195 580V540L160 500"/>
          <path fill="#ffeac0" stroke="none" d="M388 212L408 209 402 222 385 233 382 248 366 258 362 250 372 234Z"/>
          <path class="dots" d="M425 264h0M446 285h0M508 315L520 330V340M520 360h0M530 400L542 390V402M530 422h0M425 412h0M425 433h0M362 420h0M268 474h0M572 475V485M582 492V520M585 546L562 548 572 558M548 622H566M582 612h0M498 590V602M457 622h0M436 643h0M17 550V580M28 540L25 575M17 600h0M28 608V624M130 600h0M58 822h0M152 810h0M120 758h0M152 700H170M168 722h0M195 715V725M45 665L90 720M92 735L110 740M235 760H285M258 748h0M300 770L310 795M378 670L370 680M350 770h0M415 800V820M555 710H585M760 780h0M908 832h0M930 790h0M350 740h0"/>
        </g>
      </svg>

      <div class="map-controls">
        <div class="zoom-group">
          <button class="zoom-button" aria-label="Zoom in"><svg width="28" height="28" viewBox="0 0 28 28" stroke="#474747" stroke-width="6"><path d="M0 14H28M14 0V28"/></svg></button>
          <button class="zoom-button" aria-label="Zoom out"><svg width="28" height="28" viewBox="0 0 28 28" stroke="#474747" stroke-width="6"><path d="M0 14H28"/></svg></button>
        </div>
        <button class="map-button" aria-label="Globe view"><svg width="70" height="70" viewBox="0 0 70 70"><circle cx="35" cy="35" r="35" fill="#474747"/><g fill="none" stroke="#fff" stroke-width="5"><path d="M0 17H70M0 54H70M26-2Q9 35 26 72M44-2Q61 35 44 72"/></g></svg></button>
        <button class="map-button" aria-label="Bubble map">
          <svg width="98" height="98" viewBox="0 0 98 98">
            <defs><linearGradient id="fade" x1="0" y1="0" x2="0" y2="1"><stop offset=".65" stop-color="#fff" stop-opacity="0"/><stop offset="1" stop-color="#fff" stop-opacity=".9"/></linearGradient><clipPath id="disc"><circle cx="49" cy="49" r="49"/></clipPath></defs>
            <g clip-path="url(#disc)"><circle cx="49" cy="49" r="49" fill="#4db3e3"/><g stroke="#cbebf8" stroke-width="4"><circle cx="49" cy="57" r="42" fill="#5cbdea"/><circle cx="49" cy="65" r="34" fill="#71c8ee"/><circle cx="49" cy="74" r="26" fill="#86d1f2"/><circle cx="49" cy="82" r="17" fill="#9fdaf5"/></g><rect width="98" height="98" fill="url(#fade)"/></g>
            <circle cx="49" cy="89" r="8" fill="#b4e1f7" stroke="#cbebf8" stroke-width="3"/>
          </svg>
        </button>
      </div>

      <div class="filters">
        <label class="filter"><select aria-label="Metric"><option>Cases</option><option>Deaths</option></select><svg width="42" height="26" viewBox="0 0 42 26" aria-hidden="true"><path d="M4 4L21 20 38 4"/></svg></label>
        <label class="filter"><select aria-label="Period"><option>Total</option><option>Last 7 days</option></select><svg width="42" height="26" viewBox="0 0 42 26" aria-hidden="true"><path d="M4 4L21 20 38 4"/></svg></label>
      </div>
    </section>

    <section class="summary">
      <p><b class="cases">Globally</b>, as of <b class="cases">5:43pm CEST, 17 May 2023</b>, there have been <b class="cases">766,440,796 confirmed cases</b> of COVID-19, including <b class="deaths">6,932,591 deaths</b>, reported to WHO. As of <b class="doses">15 May 2023</b>, a total of <b class="doses">13,352,935,288 vaccine</b></p>
    </section>
  </main>
  <nav class="gesture-bar" aria-label="System navigation"><span class="pill"></span></nav>
</div>
</body>
</html>
```
FILE: styles.css
```css
* { box-sizing: border-box; }
body { margin: 0; background: #fff; font-family: Roboto, "Liberation Sans", sans-serif; color: #000; }
button { border: 0; padding: 0; background: none; cursor: pointer; }
svg { display: block; }

.screen { display: flex; flex-direction: column; min-height: 100vh; border-radius: 140px; overflow: hidden; background: #fafafa; }

.status-bar { display: flex; align-items: center; height: 84px; padding: 4px 98px 0; background: #1a70b7; color: #fff; }
.clock { font-size: 49px; line-height: 64px; padding-top: 4px; }
.sd { margin-left: 30px; }
.status-icons { margin-left: auto; }

.app-bar { position: relative; z-index: 1; display: flex; align-items: center; gap: 126px; height: 196px; padding: 0 70px; background: #2196f3; color: #fff; box-shadow: 0 8px 14px rgba(0, 0, 0, .35); }
.app-title { margin: 0; padding-top: 4px; font-size: 70px; line-height: 84px; font-weight: 500; }

.page { flex: 1; margin-right: 2px; background: #fff; }
.site-header { display: flex; justify-content: space-between; align-items: flex-start; padding: 81px 78px 0 70px; }
.brand { display: flex; align-items: center; gap: 12px; text-decoration: none; color: #0093d9; }
.brand-name { font-family: "Liberation Sans Narrow", "Open Sans Condensed", Roboto, sans-serif; font-size: 59px; line-height: 54px; font-weight: 700; white-space: nowrap; }
.site-actions { display: flex; align-items: center; gap: 88px; padding-top: 50px; }
.dashboard-title { margin: 0; padding: 107px 70px 48px; font-size: 49px; line-height: 58px; font-weight: 700; color: #474747; }

.map { position: relative; background: #e8e8e8; padding-bottom: 53px; }
.world { width: 100%; height: auto; }
.land path { stroke-width: 5; vector-effect: non-scaling-stroke; }
.land { stroke: #777; stroke-linejoin: round; stroke-linecap: round; }
.c1 { fill: #55cbf5; }
.c2 { fill: #00a9e3; }
.c3 { fill: #008dbe; }
.c4 { fill: #006f93; }
.rock, .lakes { fill: #777; }
.line, .dots { fill: none; }
.water { fill: #ddd; stroke: none; }

.map-controls { position: absolute; top: 69px; right: 68px; display: flex; flex-direction: column; gap: 32px; width: 132px; }
.zoom-group { padding: 1px; border: 3px solid #ccc; border-radius: 18px; }
.zoom-button { display: flex; align-items: center; justify-content: center; width: 100%; height: 126px; padding-left: 6px; background: #fff; border: 3px solid #ccc; }
.zoom-button:first-child { border-radius: 16px 16px 0 0; }
.zoom-button:last-child { border-radius: 0 0 16px 16px; }
.map-button { display: flex; align-items: center; justify-content: center; height: 132px; background: #fff; border: 3px solid #ccc; border-radius: 18px; }
.map-button:last-child { padding-top: 18px; }

.filters { display: flex; gap: 30px; padding: 0 53px; }
.filter { position: relative; flex: 0 1 425px; }
.filter select { appearance: none; display: block; width: 100%; height: 133px; padding: 0 90px 0 34px; font: 400 42px/56px Roboto, sans-serif; color: #333; background: #fff; border: 3px solid #ccc; border-radius: 14px; }
.filter svg { position: absolute; right: 44px; top: 56px; pointer-events: none; fill: none; stroke: #ccc; stroke-width: 8; stroke-linecap: round; stroke-linejoin: round; }

.summary { margin: 490px 68px 0 70px; padding: 69px 34px 5px; border-top: 3px solid #b0b0b0; text-align: center; }
.summary p { margin: 0; font-size: 63px; line-height: 82px; font-weight: 300; }
.summary b { font-weight: 700; }
.cases { color: #0093d9; }
.deaths { color: #d86422; }
.doses { color: #139c38; }

.gesture-bar { display: flex; align-items: center; justify-content: center; height: 84px; background: #000; }
.pill { width: 378px; height: 14px; border-radius: 7px; background: #ebebeb; }
```
